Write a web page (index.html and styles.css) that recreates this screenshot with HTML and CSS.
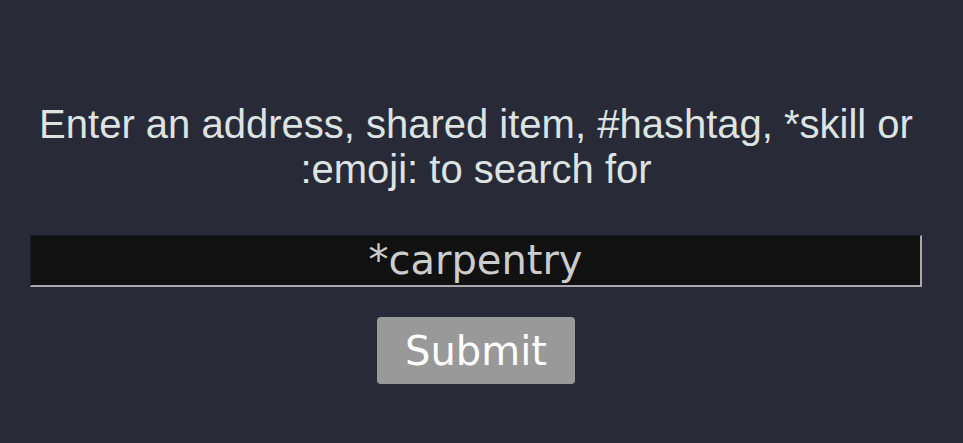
FILE: index.html
```html
<!DOCTYPE html>
<html>
<head>
<meta charset="utf-8">
<link rel="stylesheet" href="styles.css">
</head>
<body>
<main class="page">
  <form class="search">
    <p class="prompt">Enter an address, shared item, #hashtag, *skill or :emoji: to search for</p>
    <input class="query" type="text" value="*carpentry">
    <button class="submit" type="button">Submit</button>
  </form>
</main>
</body>
</html>
```
FILE: styles.css
```css
html, body {
  margin: 0;
  padding: 0;
  background: #282b37;
  height: 100%;
}
.page {
  padding: 102px 41px 0 30px;
}
.search {
  display: flex;
  flex-direction: column;
  align-items: center;
}
.prompt {
  margin: 0;
  font-family: "Liberation Sans", Arial, sans-serif;
  font-size: 40px;
  line-height: 45px;
  color: #dde3e3;
  text-align: center;
}
.query {
  margin-top: 43px;
  box-sizing: border-box;
  width: 100%;
  height: 52px;
  background: #111;
  color: #ccc;
  font-family: "DejaVu Sans", sans-serif;
  font-size: 40px;
  text-align: center;
  border-style: solid;
  border-width: 1px 2px 2px 1px;
  border-top-color: #1c1c1c;
  border-left-color: #1c1c1c;
  border-bottom-color: #aaa;
  border-right-color: #aaa;
  padding: 0 0 2px;
  outline: none;
}
.submit {
  margin-top: 30px;
  width: 198px;
  height: 67px;
  background: #999;
  color: #fff;
  border: none;
  border-radius: 4px;
  font-family: "DejaVu Sans", sans-serif;
  font-size: 40px;
  padding: 0;
}
```
